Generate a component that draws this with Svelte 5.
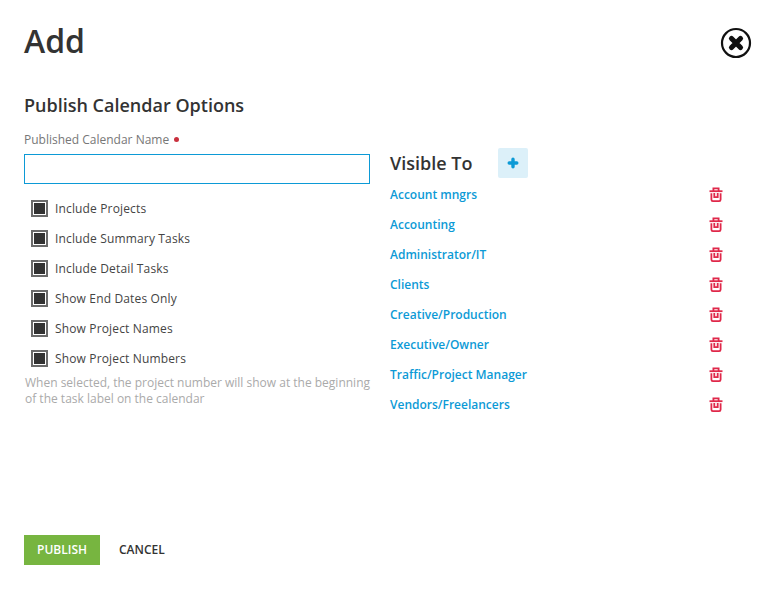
<script>
  const options = [
    'Include Projects',
    'Include Summary Tasks',
    'Include Detail Tasks',
    'Show End Dates Only',
    'Show Project Names',
    'Show Project Numbers'
  ];

  const groups = [
    'Account mngrs',
    'Accounting',
    'Administrator/IT',
    'Clients',
    'Creative/Production',
    'Executive/Owner',
    'Traffic/Project Manager',
    'Vendors/Freelancers'
  ];
</script>

<div class="page">
  <header class="top">
    <h1>Add</h1>
    <button class="close" aria-label="Close">
      <svg width="32" height="32" viewBox="0 0 32 32">
        <circle cx="16" cy="16" r="14" fill="none" stroke="#111" stroke-width="2.2" />
        <path d="M11.5 11.5 20.5 20.5M20.5 11.5 11.5 20.5" stroke="#111" stroke-width="5.2" stroke-linecap="round" />
      </svg>
    </button>
  </header>

  <h2>Publish Calendar Options</h2>

  <div class="columns">
    <div class="left">
      <label class="name-label" for="cal-name">Published Calendar Name <span class="req"></span></label>
      <input id="cal-name" type="text" />
      <ul class="options">
        {#each options as option}
          <li><span class="check"><span></span></span>{option}</li>
        {/each}
      </ul>
      <p class="hint">When selected, the project number will show at the beginning of the task label on the calendar</p>
    </div>

    <div class="right">
      <div class="visible-head">
        <h3>Visible To</h3>
        <button class="add" aria-label="Add">
          <svg width="12" height="12" viewBox="0 0 12 12">
            <path d="M6 2.2v7.6M2.2 6h7.6" stroke="#0c9ad6" stroke-width="3.4" stroke-linecap="round" />
          </svg>
        </button>
      </div>
      <ul class="groups">
        {#each groups as group}
          <li>
            <span>{group}</span>
            <svg width="14" height="15" viewBox="0 0 14 15" fill="none" stroke="#e0284a" stroke-width="1.8">
              <path d="M0.5 4.2h13" />
              <path d="M4.4 4V1.4h5.2V4" />
              <path d="M2.4 6.2v6.3c0 1 .6 1.6 1.5 1.6h6.2c.9 0 1.5-.6 1.5-1.6V6.2" />
              <path d="M5.3 6v4.2h3.4V6" />
            </svg>
          </li>
        {/each}
      </ul>
    </div>
  </div>

  <footer class="actions">
    <button class="publish">PUBLISH</button>
    <button class="cancel">CANCEL</button>
  </footer>
</div>

<style>
  :global(body) {
    margin: 0;
    background: #fff;
    font-family: "Open Sans", "Liberation Sans", sans-serif;
  }

  .page {
    width: 769px;
    height: 595px;
    box-sizing: border-box;
    padding: 20px 18px 0 24px;
    display: flex;
    flex-direction: column;
    color: #333;
  }

  .top {
    display: flex;
    justify-content: space-between;
    align-items: flex-start;
    height: 75px;
  }

  h1 {
    margin: 0;
    font-size: 32px;
    line-height: 42px;
    font-weight: 600;
  }

  .close {
    border: 0;
    background: none;
    padding: 0;
    margin-top: 7px;
    margin-right: -1px;
    width: 32px;
    height: 32px;
  }

  h2 {
    margin: 0;
    font-size: 18px;
    line-height: 20px;
    font-weight: 600;
  }

  .columns {
    display: flex;
    gap: 20px;
    margin-top: 17px;
  }

  .left {
    width: 346px;
  }

  .name-label {
    display: block;
    font-size: 12px;
    line-height: 16px;
    color: #777;
  }

  .req {
    display: inline-block;
    width: 5px;
    height: 5px;
    margin-left: 2px;
    border-radius: 50%;
    background: #c9303e;
    vertical-align: 2px;
  }

  input {
    display: block;
    width: 100%;
    height: 30px;
    box-sizing: border-box;
    margin-top: 6px;
    border: 1px solid #0c9ad6;
    outline: none;
  }

  .options {
    list-style: none;
    margin: 9px 0 0;
    padding: 0 0 0 7px;
  }

  .options li {
    display: flex;
    align-items: center;
    gap: 7px;
    height: 30px;
    font-size: 12px;
    letter-spacing: 0.15px;
    color: #444;
  }

  .check {
    width: 17px;
    height: 17px;
    box-sizing: border-box;
    border: 2px solid #6b6b6b;
    padding: 1px;
  }

  .check span {
    display: block;
    width: 100%;
    height: 100%;
    background: #333;
  }

  .hint {
    margin: 2px -6px 0 1px;
    font-size: 12px;
    line-height: 16px;
    color: #aaa;
  }

  .right {
    flex: 1;
    padding-top: 16px;
  }

  .visible-head {
    display: flex;
    align-items: center;
    gap: 26px;
    height: 30px;
  }

  h3 {
    margin: 0;
    font-size: 18px;
    font-weight: 600;
  }

  .add {
    width: 30px;
    height: 30px;
    padding: 0;
    border: 0;
    border-radius: 2px;
    background: #dcf0f9;
    display: flex;
    align-items: center;
    justify-content: center;
  }

  .groups {
    list-style: none;
    margin: 1px 0 0;
    padding: 0 28px 0 0;
  }

  .groups li {
    display: flex;
    justify-content: space-between;
    align-items: center;
    height: 30px;
    font-size: 12px;
    font-weight: 600;
    color: #0c9ad6;
  }

  .actions {
    display: flex;
    align-items: center;
    gap: 19px;
    margin-top: auto;
    margin-bottom: 30px;
  }

  .actions button {
    border: 0;
    font: inherit;
    font-size: 12px;
    font-weight: 600;
    line-height: 28px;
    height: 30px;
    padding: 0 0 1px;
  }

  .publish {
    width: 76px;
    background: #77b540;
    color: #fff;
  }

  .cancel {
    background: none;
    color: #333;
  }
</style>
